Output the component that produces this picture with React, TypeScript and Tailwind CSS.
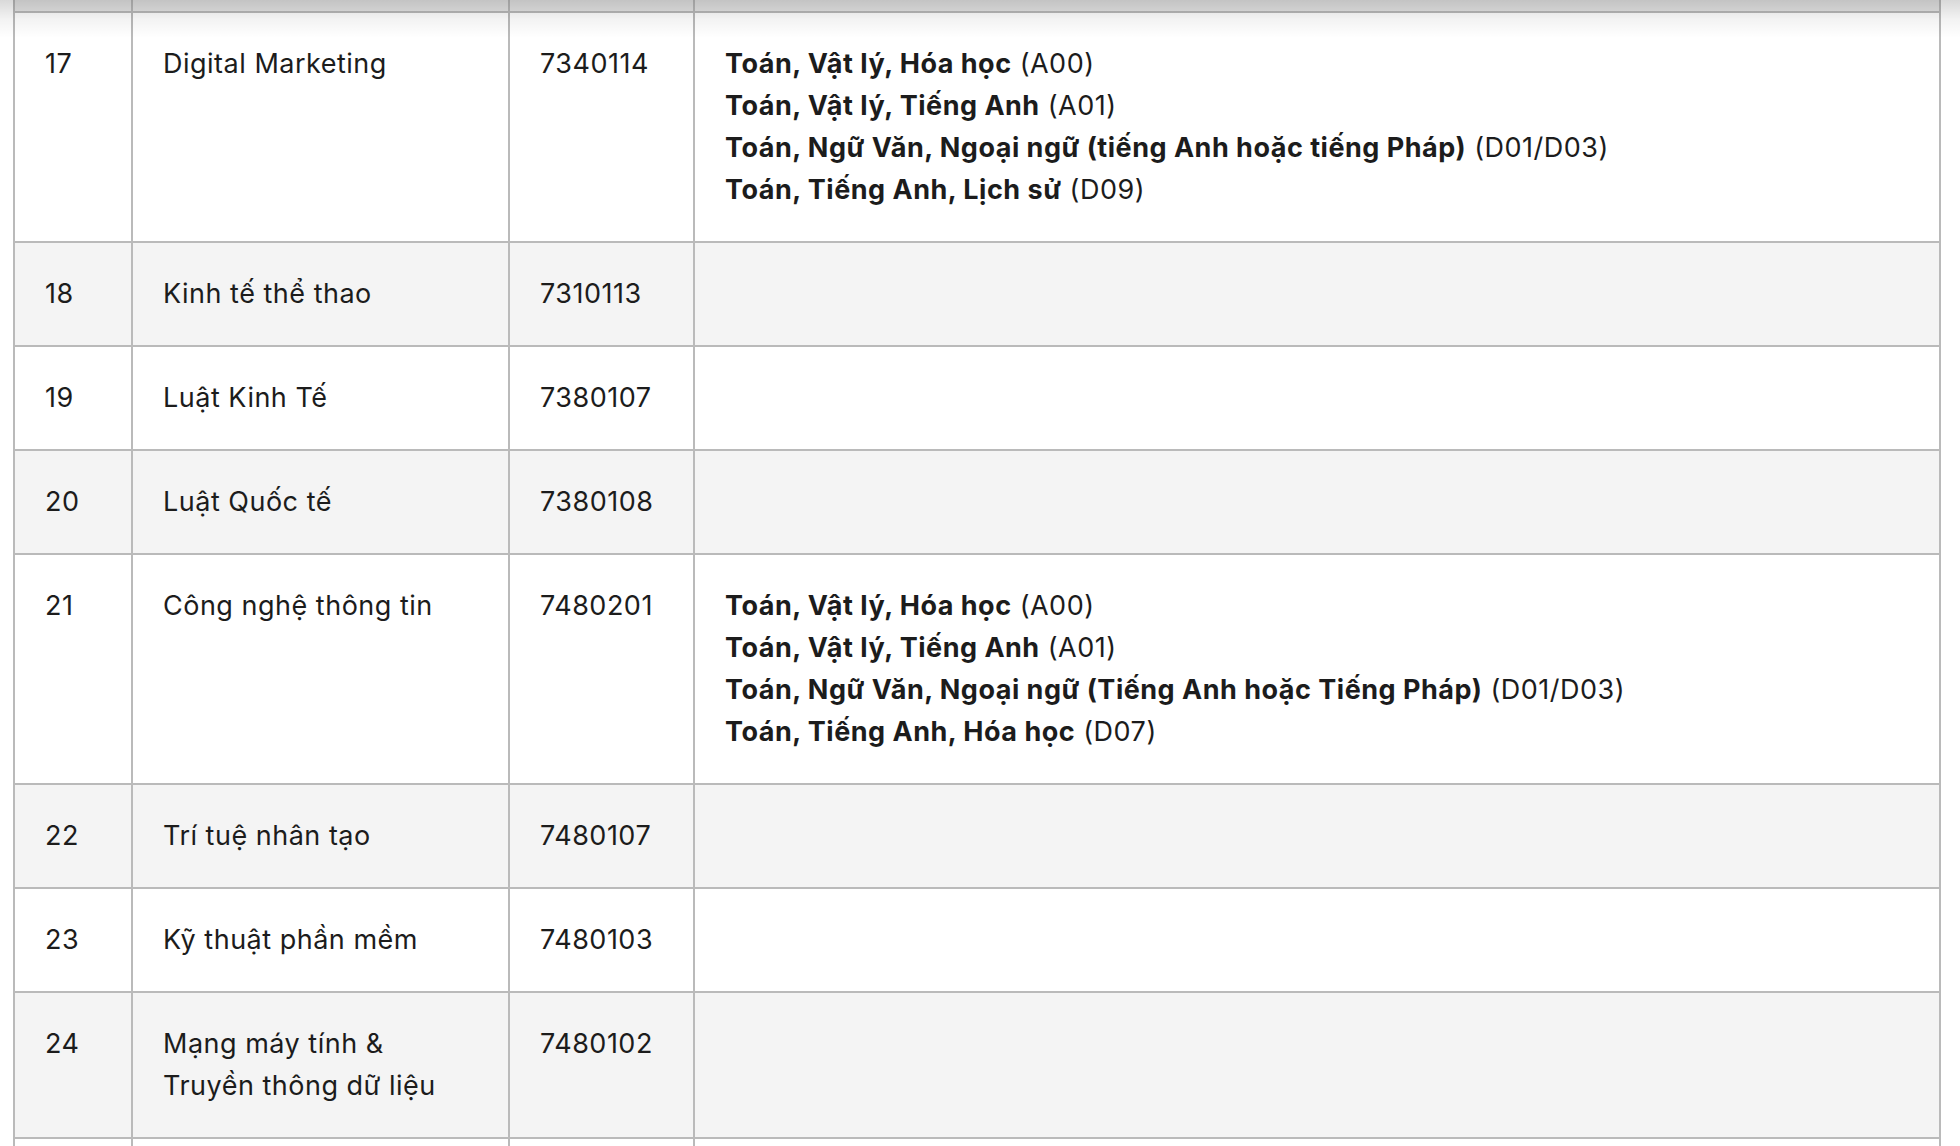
type Combo = { subjects: string; code: string };

type Row = {
  no: number;
  name: React.ReactNode;
  code: string;
  combos?: Combo[];
};

const rows: Row[] = [
  {
    no: 17,
    name: "Digital Marketing",
    code: "7340114",
    combos: [
      { subjects: "Toán, Vật lý, Hóa học", code: "(A00)" },
      { subjects: "Toán, Vật lý, Tiếng Anh", code: "(A01)" },
      {
        subjects: "Toán, Ngữ Văn, Ngoại ngữ (tiếng Anh hoặc tiếng Pháp)",
        code: "(D01/D03)",
      },
      { subjects: "Toán, Tiếng Anh, Lịch sử", code: "(D09)" },
    ],
  },
  { no: 18, name: "Kinh tế thể thao", code: "7310113" },
  { no: 19, name: "Luật Kinh Tế", code: "7380107" },
  { no: 20, name: "Luật Quốc tế", code: "7380108" },
  {
    no: 21,
    name: "Công nghệ thông tin",
    code: "7480201",
    combos: [
      { subjects: "Toán, Vật lý, Hóa học", code: "(A00)" },
      { subjects: "Toán, Vật lý, Tiếng Anh", code: "(A01)" },
      {
        subjects: "Toán, Ngữ Văn, Ngoại ngữ (Tiếng Anh hoặc Tiếng Pháp)",
        code: "(D01/D03)",
      },
      { subjects: "Toán, Tiếng Anh, Hóa học", code: "(D07)" },
    ],
  },
  { no: 22, name: "Trí tuệ nhân tạo", code: "7480107" },
  { no: 23, name: "Kỹ thuật phần mềm", code: "7480103" },
  {
    no: 24,
    name: (
      <>
        Mạng máy tính &amp;
        <br />
        Truyền thông dữ liệu
      </>
    ),
    code: "7480102",
  },
];

const cell = "border-2 border-[#bababa] px-[30px] py-[30px] align-top";

const App = () => {
  return (
    <div
      className="relative min-h-screen bg-white pl-[13px] pr-[19px] text-[27px] leading-[42px] tracking-[0.5px] text-[#1c1c1c]"
      style={{ fontFamily: "Inter, 'Noto Sans', sans-serif" }}
    >
      <table className="w-full table-fixed border-collapse">
        <colgroup>
          <col className="w-[118px]" />
          <col className="w-[377px]" />
          <col className="w-[185px]" />
          <col />
        </colgroup>
        <thead>
          <tr className="h-[12px] bg-[#e6e6e6]">
            <th className="border-2 border-t-0 border-[#bababa] p-0"></th>
            <th className="border-2 border-t-0 border-[#bababa] p-0"></th>
            <th className="border-2 border-t-0 border-[#bababa] p-0"></th>
            <th className="border-2 border-t-0 border-[#bababa] p-0"></th>
          </tr>
        </thead>
        <tbody>
          {rows.map((row, i) => (
            <tr
              key={row.no}
              className={i % 2 === 1 ? "bg-[#f4f4f4]" : "bg-white"}
            >
              <td className={cell}>{row.no}</td>
              <td className={cell}>{row.name}</td>
              <td className={cell}>{row.code}</td>
              <td className={cell}>
                {row.combos &&
                  row.combos.map((c) => (
                    <div key={c.subjects}>
                      <span className="font-bold">{c.subjects}</span> {c.code}
                    </div>
                  ))}
              </td>
            </tr>
          ))}
          {/* next row, only its top edge shows */}
          <tr className="h-[104px] bg-white">
            <td className={cell}></td>
            <td className={cell}></td>
            <td className={cell}></td>
            <td className={cell}></td>
          </tr>
        </tbody>
      </table>

      <div className="pointer-events-none absolute inset-x-0 top-0 h-[38px] bg-gradient-to-b from-black/15 via-black/5 to-transparent"></div>
    </div>
  );
};

export default App;
